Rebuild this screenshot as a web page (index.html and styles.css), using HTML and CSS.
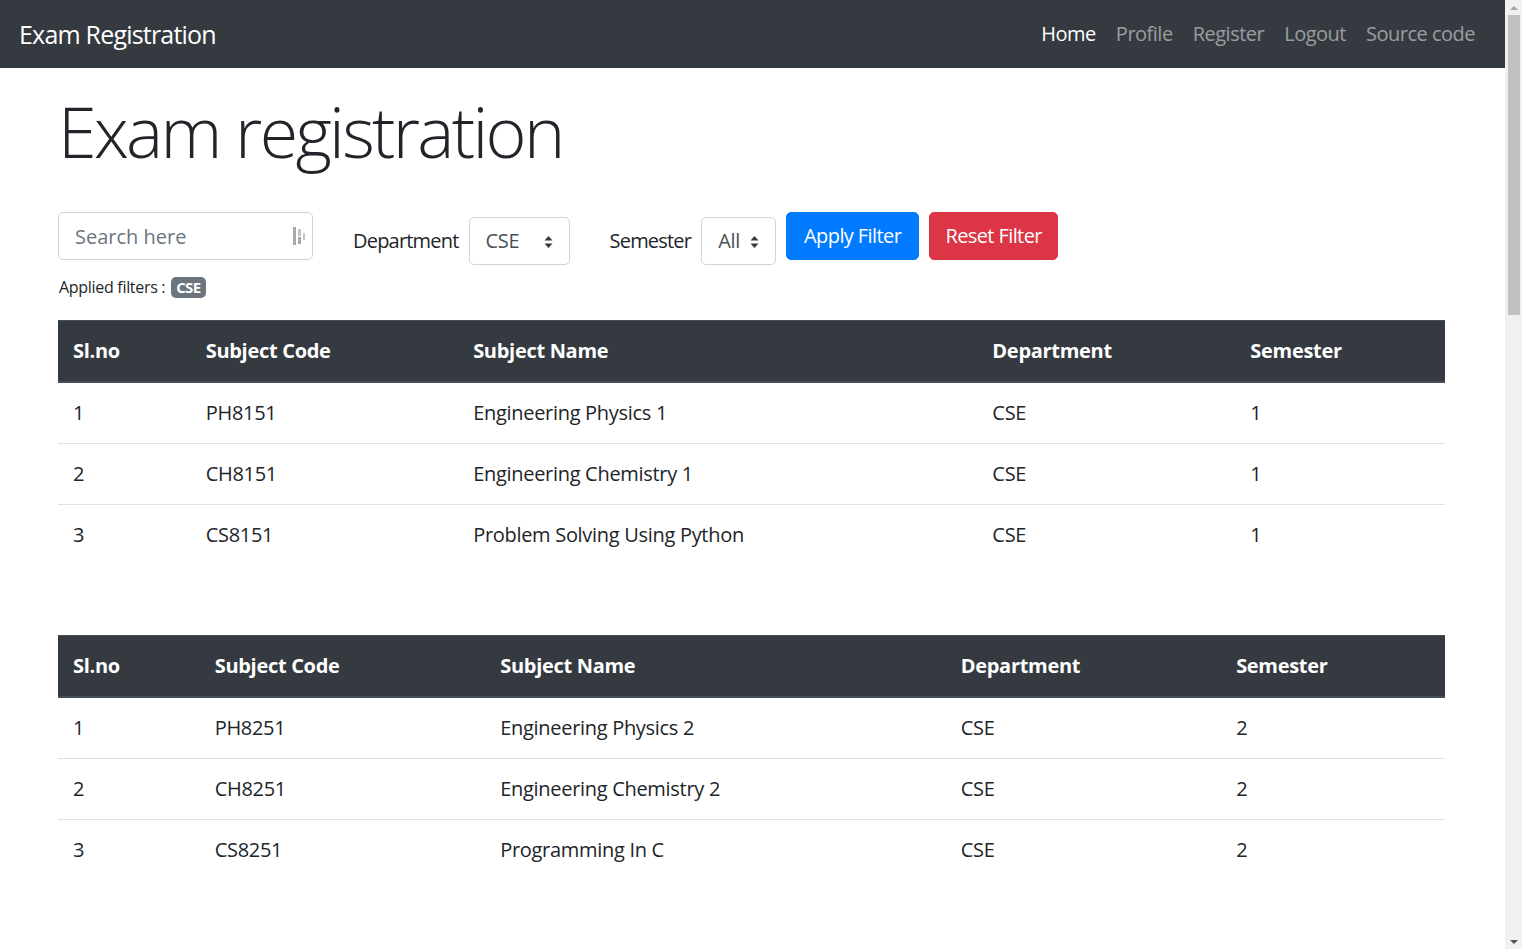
FILE: index.html
```html
<!DOCTYPE html>
<html lang="en">
<head>
<meta charset="utf-8">
<title>Exam Registration</title>
<link rel="stylesheet" href="styles.css">
</head>
<body>
<nav class="navbar">
  <a class="brand" href="#">Exam Registration</a>
  <ul class="nav">
    <li><a class="nav-link active" href="#">Home</a></li>
    <li><a class="nav-link" href="#">Profile</a></li>
    <li><a class="nav-link" href="#">Register</a></li>
    <li><a class="nav-link" href="#">Logout</a></li>
    <li><a class="nav-link" href="#">Source code</a></li>
  </ul>
</nav>

<main class="container">
  <h1 class="display">Exam registration</h1>

  <form class="filters">
    <div class="search">
      <input class="search-input" type="text" placeholder="Search here">
      <svg class="search-icon" width="14" height="22" viewBox="0 0 14 22">
        <rect x="0" y="2" width="3" height="18" fill="#a8a8a8"/>
        <rect x="5" y="4" width="3" height="7" fill="#c4c4c4"/>
        <rect x="5" y="12" width="3" height="7" fill="#a8a8a8"/>
        <rect x="10" y="8" width="2" height="7" fill="#c4c4c4"/>
      </svg>
    </div>
    <label class="field">
      <span class="field-label">Department</span>
      <span class="select select-dept">CSE
        <svg class="caret" width="9" height="14" viewBox="0 0 9 14"><path d="M4.5 1 L8.5 5.5 H0.5 Z M4.5 13 L8.5 8.5 H0.5 Z" fill="#343a40"/></svg>
      </span>
    </label>
    <label class="field">
      <span class="field-label">Semester</span>
      <span class="select select-sem">All
        <svg class="caret" width="9" height="14" viewBox="0 0 9 14"><path d="M4.5 1 L8.5 5.5 H0.5 Z M4.5 13 L8.5 8.5 H0.5 Z" fill="#343a40"/></svg>
      </span>
    </label>
    <button type="button" class="btn btn-primary">Apply Filter</button>
    <button type="button" class="btn btn-danger">Reset Filter</button>
  </form>

  <p class="applied">Applied filters : <span class="badge">CSE</span></p>

  <table class="table">
    <thead><tr><th>Sl.no</th><th>Subject Code</th><th>Subject Name</th><th>Department</th><th>Semester</th></tr></thead>
    <tbody>
      <tr><td>1</td><td>PH8151</td><td>Engineering Physics 1</td><td>CSE</td><td>1</td></tr>
      <tr><td>2</td><td>CH8151</td><td>Engineering Chemistry 1</td><td>CSE</td><td>1</td></tr>
      <tr><td>3</td><td>CS8151</td><td>Problem Solving Using Python</td><td>CSE</td><td>1</td></tr>
    </tbody>
  </table>

  <table class="table">
    <thead><tr><th>Sl.no</th><th>Subject Code</th><th>Subject Name</th><th>Department</th><th>Semester</th></tr></thead>
    <tbody>
      <tr><td>1</td><td>PH8251</td><td>Engineering Physics 2</td><td>CSE</td><td>2</td></tr>
      <tr><td>2</td><td>CH8251</td><td>Engineering Chemistry 2</td><td>CSE</td><td>2</td></tr>
      <tr><td>3</td><td>CS8251</td><td>Programming In C</td><td>CSE</td><td>2</td></tr>
    </tbody>
  </table>

  <table class="table">
    <thead><tr><th>Sl.no</th><th>Subject Code</th><th>Subject Name</th><th>Department</th><th>Semester</th></tr></thead>
    <tbody>
      <tr><td>1</td><td>MA8351</td><td>Discrete Mathematics</td><td>CSE</td><td>3</td></tr>
      <tr><td>2</td><td>CS8351</td><td>Digital Principles And System Design</td><td>CSE</td><td>3</td></tr>
      <tr><td>3</td><td>CS8391</td><td>Data Structures</td><td>CSE</td><td>3</td></tr>
    </tbody>
  </table>

  <table class="table">
    <thead><tr><th>Sl.no</th><th>Subject Code</th><th>Subject Name</th><th>Department</th><th>Semester</th></tr></thead>
    <tbody>
      <tr><td>1</td><td>MA8402</td><td>Probability And Queueing Theory</td><td>CSE</td><td>4</td></tr>
      <tr><td>2</td><td>CS8491</td><td>Computer Architecture</td><td>CSE</td><td>4</td></tr>
      <tr><td>3</td><td>CS8492</td><td>Database Management Systems</td><td>CSE</td><td>4</td></tr>
    </tbody>
  </table>

  <table class="table">
    <thead><tr><th>Sl.no</th><th>Subject Code</th><th>Subject Name</th><th>Department</th><th>Semester</th></tr></thead>
    <tbody>
      <tr><td>1</td><td>MA8551</td><td>Algebra And Number Theory</td><td>CSE</td><td>5</td></tr>
      <tr><td>2</td><td>CS8591</td><td>Computer Networks</td><td>CSE</td><td>5</td></tr>
      <tr><td>3</td><td>CS8501</td><td>Theory Of Computation</td><td>CSE</td><td>5</td></tr>
    </tbody>
  </table>

  <table class="table">
    <thead><tr><th>Sl.no</th><th>Subject Code</th><th>Subject Name</th><th>Department</th><th>Semester</th></tr></thead>
    <tbody>
      <tr><td>1</td><td>CS8601</td><td>Mobile Computing</td><td>CSE</td><td>6</td></tr>
      <tr><td>2</td><td>CS8602</td><td>Compiler Design</td><td>CSE</td><td>6</td></tr>
      <tr><td>3</td><td>CS8603</td><td>Distributed Systems</td><td>CSE</td><td>6</td></tr>
    </tbody>
  </table>

  <table class="table">
    <thead><tr><th>Sl.no</th><th>Subject Code</th><th>Subject Name</th><th>Department</th><th>Semester</th></tr></thead>
    <tbody>
      <tr><td>1</td><td>MG8591</td><td>Principles Of Management</td><td>CSE</td><td>7</td></tr>
      <tr><td>2</td><td>CS8792</td><td>Cryptography And Network Security</td><td>CSE</td><td>7</td></tr>
      <tr><td>3</td><td>CS8791</td><td>Cloud Computing</td><td>CSE</td><td>7</td></tr>
    </tbody>
  </table>

  <table class="table">
    <thead><tr><th>Sl.no</th><th>Subject Code</th><th>Subject Name</th><th>Department</th><th>Semester</th></tr></thead>
    <tbody>
      <tr><td>1</td><td>CS8811</td><td>Project Work</td><td>CSE</td><td>8</td></tr>
      <tr><td>2</td><td>IT8076</td><td>Software Testing</td><td>CSE</td><td>8</td></tr>
      <tr><td>3</td><td>GE8076</td><td>Professional Ethics In Engineering</td><td>CSE</td><td>8</td></tr>
    </tbody>
  </table>
</main>

<div class="scrollbar" aria-hidden="true">
  <span class="sb-arrow sb-up"></span>
  <span class="sb-track"><span class="sb-thumb"></span></span>
  <span class="sb-arrow sb-down"></span>
</div>
</body>
</html>
```

FILE: styles.css
```css
* { box-sizing: border-box; }

body {
  margin: 0 17px 0 0;
  font-family: "Open Sans", "Noto Sans", sans-serif;
  font-size: 20px;
  line-height: 1.5;
  color: #212529;
  background: #fff;
  letter-spacing: -0.3px;
}

/* window scrollbar (drawn, as the capture hides the native one) */
.scrollbar {
  position: fixed;
  top: 0;
  right: 0;
  width: 17px;
  height: 100vh;
  background: #f1f1f1;
  display: flex;
  flex-direction: column;
  align-items: center;
}

.sb-arrow {
  flex: 0 0 15px;
  width: 17px;
  display: flex;
  align-items: center;
  justify-content: center;
}

.sb-arrow::before {
  content: "";
  width: 0;
  height: 0;
  border-left: 4px solid transparent;
  border-right: 4px solid transparent;
}

.sb-up::before { border-bottom: 4px solid #a3a3a3; }
.sb-down::before { border-top: 4px solid #505050; }

.sb-track {
  flex: 1;
  width: 17px;
  padding: 0 2px;
}

.sb-thumb {
  display: block;
  height: 300px;
  background: #c1c1c1;
  margin-left: 1px;
}

.navbar {
  height: 68px;
  background: #343a40;
  display: flex;
  align-items: center;
  justify-content: space-between;
  padding: 0 20px 0 19px;
}

.brand {
  color: #fff;
  text-decoration: none;
  font-size: 25px;
  line-height: 1;
  letter-spacing: -0.8px;
}

.nav {
  list-style: none;
  margin: 0;
  padding: 0;
  display: flex;
}

.nav-link {
  display: block;
  padding: 0 10px;
  color: rgba(255, 255, 255, 0.5);
  text-decoration: none;
  font-size: 20px;
  letter-spacing: -0.5px;
}

.nav-link.active { color: #fff; }

.container {
  width: 1425px;
  margin: 0 auto;
  padding: 21px 20px 60px 18px;
}

.display {
  font-size: 70px;
  font-weight: 300;
  line-height: 1.2;
  margin: 0 0 39px;
  letter-spacing: -2.7px;
}

.filters {
  display: flex;
  align-items: flex-start;
  height: 53px;
}

.search {
  position: relative;
  width: 255px;
  height: 48px;
}

.search-input {
  width: 100%;
  height: 100%;
  border: 1px solid #ced4da;
  border-radius: 5px;
  padding: 0 16px;
  font: inherit;
  color: #495057;
}

.search-input::placeholder { color: #6c757d; }

.search-icon {
  position: absolute;
  right: 6px;
  top: 13px;
}

.field {
  display: flex;
  align-items: center;
  margin-top: 5px;
  margin-left: 40px;
}

.field-label {
  margin-right: 10px;
  letter-spacing: -0.8px;
}

.select {
  display: flex;
  align-items: center;
  justify-content: space-between;
  height: 48px;
  padding: 0 16px;
  border: 1px solid #ced4da;
  border-radius: 5px;
  color: #495057;
}

.select-dept { width: 101px; }
.select-sem { width: 75px; margin-right: 10px; }

.caret { margin-top: 1px; }

.btn {
  height: 48px;
  padding: 0;
  border: 1px solid transparent;
  border-radius: 5px;
  font: inherit;
  letter-spacing: -0.6px;
  white-space: nowrap;
  text-align: center;
  color: #fff;
  margin-right: 10px;
}

.btn-primary { background: #007bff; border-color: #007bff; width: 133px; }
.btn-danger { background: #dc3545; border-color: #dc3545; width: 129px; }

.applied {
  margin: 10px 0 21px;
  font-size: 16px;
  line-height: 24px;
  padding-left: 1px;
  letter-spacing: -0.3px;
}

.badge {
  display: inline-block;
  background: #6c757d;
  color: #fff;
  font-weight: 700;
  font-size: 15px;
  line-height: 1;
  padding: 3px 5px;
  border-radius: 5px;
  margin-left: 2px;
  letter-spacing: -0.6px;
}

.table {
  width: 100%;
  border-collapse: collapse;
  margin-bottom: 70px;
}

.table th {
  text-align: left;
  font-weight: 700;
  padding: 15px;
  background: #343a40;
  color: #fff;
  border-top: 1px solid #454d55;
  border-bottom: 2px solid #454d55;
  line-height: 30px;
}

.table td {
  padding: 15px;
  border-top: 1px solid #dee2e6;
  line-height: 30px;
}

.table tbody tr:first-child td { border-top: 0; }
```
